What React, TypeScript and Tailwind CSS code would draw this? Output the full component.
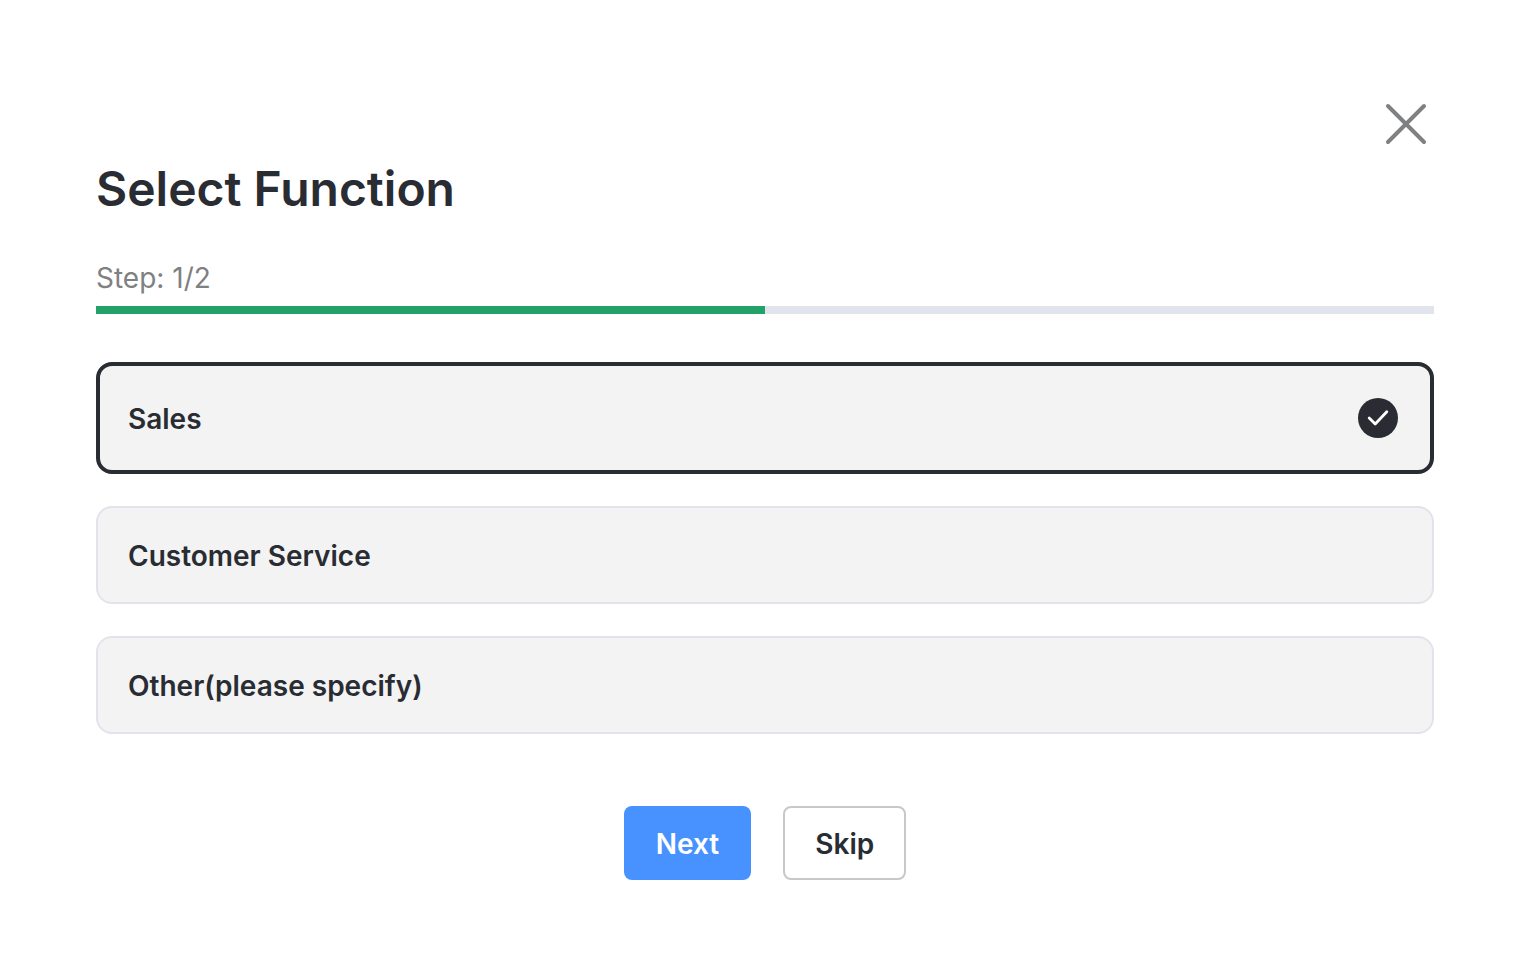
import React, { useState } from 'react';
import clsx from 'clsx';

interface FunctionOption {
  id: string;
  label: string;
}

const OPTIONS: FunctionOption[] = [
  { id: 'sales', label: 'Sales' },
  { id: 'customer-service', label: 'Customer Service' },
  { id: 'other', label: 'Other(please specify)' },
];

const CURRENT_STEP = 1;
const TOTAL_STEPS = 2;

function CloseIcon() {
  return (
    <svg viewBox="0 0 56 56" className="w-14 h-14" fill="none" stroke="currentColor" strokeWidth="4" strokeLinecap="round" aria-hidden="true">
      <path d="M10 10L46 46M46 10L10 46" />
    </svg>
  );
}

function CheckBadge() {
  return (
    <svg viewBox="0 0 40 40" className="w-10 h-10 shrink-0" fill="none" aria-hidden="true">
      <circle cx="20" cy="20" r="20" fill="#292c32" />
      <path d="M11.2 20L17.2 26L28.8 13.8" stroke="#fff" strokeWidth="2.8" strokeLinecap="round" strokeLinejoin="round" />
    </svg>
  );
}

interface OptionRowProps {
  option: FunctionOption;
  selected: boolean;
  onSelect: (id: string) => void;
}

function OptionRow({ option, selected, onSelect }: OptionRowProps) {
  return (
    <label
      className={clsx(
        'flex items-center justify-between rounded-2xl bg-[#f3f3f3] text-[28px] leading-[34px] font-semibold cursor-pointer',
        selected ? 'border-4 border-[#292c32] pl-7 pr-8 py-8' : 'border-2 border-[#e1e4ea] px-[30px] py-[29px]'
      )}
    >
      <span className="pt-0.5">{option.label}</span>
      <input
        type="radio"
        name="function"
        value={option.id}
        checked={selected}
        onChange={() => onSelect(option.id)}
        className="appearance-none w-0 h-0 ml-auto"
      />
      {selected && <CheckBadge />}
    </label>
  );
}

export default function App() {
  const [selected, setSelected] = useState('sales');
  const progress = (CURRENT_STEP / TOTAL_STEPS) * 100;

  return (
    <main className="w-full rounded-[32px] bg-white p-24 font-['Inter',sans-serif] text-[#292c32]">
      <div className="flex justify-end">
        <button type="button" aria-label="Close" className="text-[#7f8082] cursor-pointer">
          <CloseIcon />
        </button>
      </div>

      <h1 id="function-title" className="mt-2 text-[48px] leading-[58px] font-semibold">
        Select Function
      </h1>

      <p className="mt-[42px] text-[28px] leading-[36px] text-[#7f8082]">
        Step: {CURRENT_STEP}/{TOTAL_STEPS}
      </p>
      <div className="mt-2.5 h-2 bg-[#e2e4ed]">
        <div className="h-full bg-[#22a168]" style={{ width: `${progress}%` }} />
      </div>

      <form onSubmit={(e) => e.preventDefault()}>
        <fieldset aria-labelledby="function-title" className="mt-12 flex flex-col gap-8">
          {OPTIONS.map((option) => (
            <OptionRow
              key={option.id}
              option={option}
              selected={option.id === selected}
              onSelect={setSelected}
            />
          ))}
        </fieldset>

        <div className="mt-18 flex justify-center gap-8 text-[28px] leading-[34px] font-semibold">
          <button type="submit" className="rounded-lg bg-[#4892ff] px-8 pt-[21px] pb-[19px] text-white cursor-pointer">
            Next
          </button>
          <button type="button" className="rounded-lg border-2 border-[#c7c8ca] bg-white px-[30px] pt-[19px] pb-[17px] cursor-pointer">
            Skip
          </button>
        </div>
      </form>
    </main>
  );
}
